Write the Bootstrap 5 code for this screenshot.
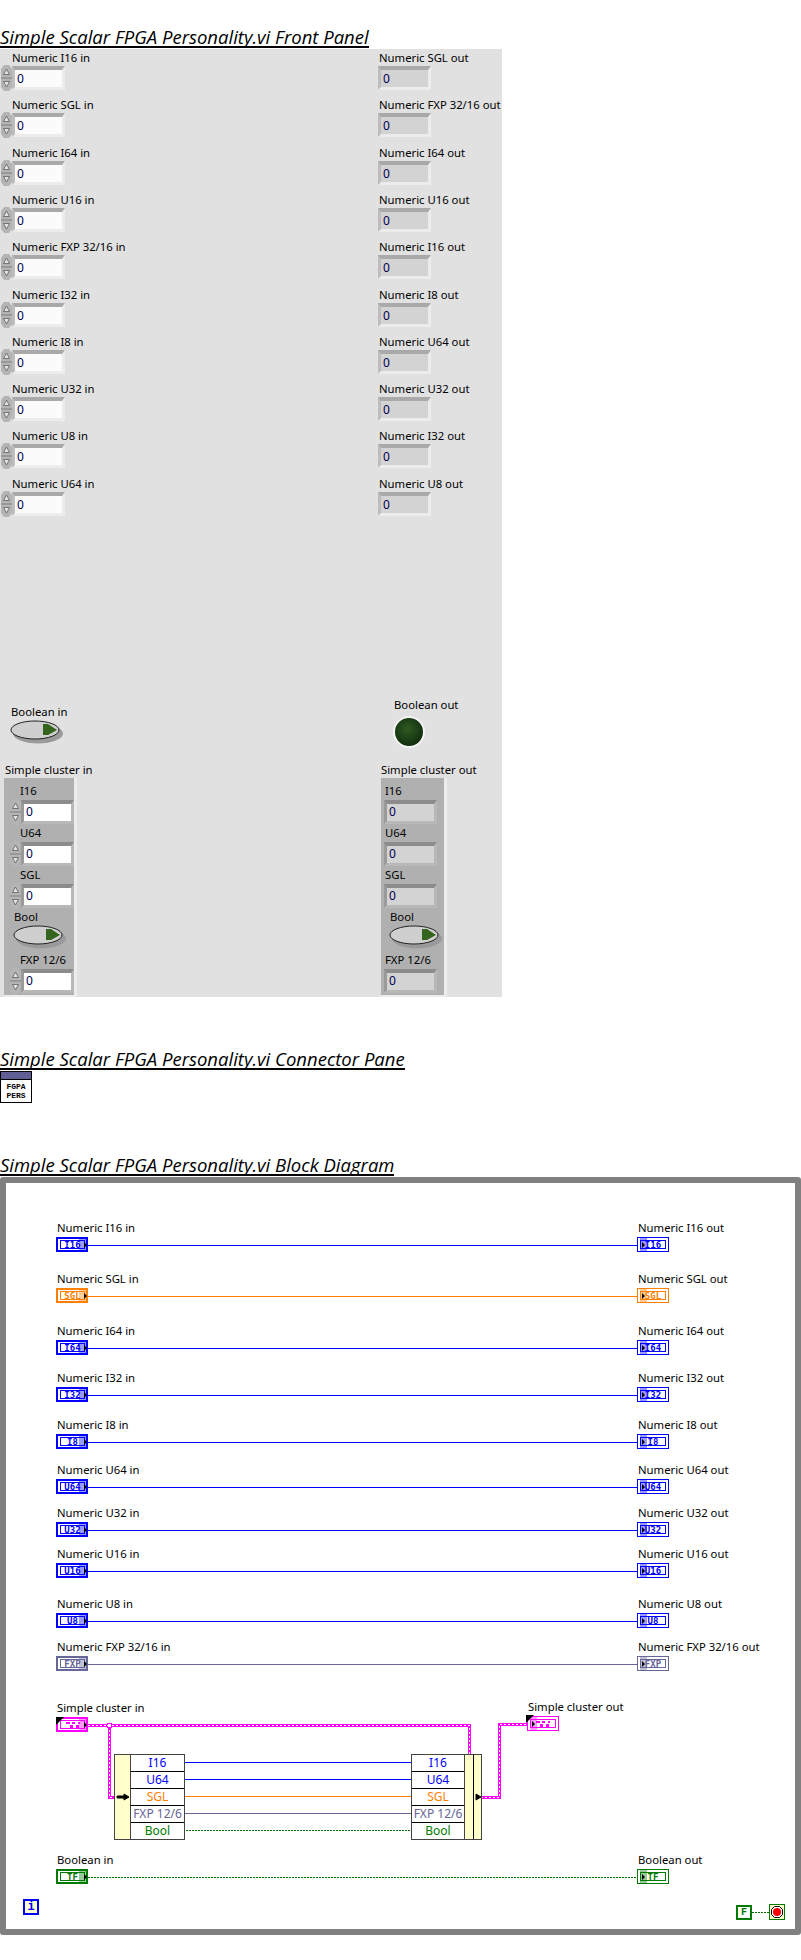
<!DOCTYPE html>
<html lang="en">
<head>
    <meta charset="UTF-8">
    <meta name="viewport" content="width=device-width, initial-scale=1.0">
    <title>Simple Scalar FPGA Personality.vi</title>
    <link href="https://cdn.jsdelivr.net/npm/bootstrap@5.3.2/dist/css/bootstrap.min.css" rel="stylesheet">
    <script src="https://cdn.jsdelivr.net/npm/bootstrap@5.3.2/dist/js/bootstrap.bundle.min.js"></script>
    <style>
        body { background: #fff; color: #000; font-family: "Noto Sans", "Liberation Sans", sans-serif; font-size: 11.3px; }
        .vi-title { display: inline-block; margin: 0; font: italic 400 18.5px/29px "Open Sans", "Noto Sans", sans-serif; border-bottom: 2px solid #000; height: 26px; white-space: nowrap; }
        .vi-head { height: 48px; display: flex; align-items: flex-end; }
        .vi-head-2 { height: 73px; }
        .vi-head-3 { height: 73px; }
        .vi-panel { position: relative; width: 502px; height: 948px; margin-top: 1px; background: #e1e1e1; }
        .vi-cluster { position: absolute; top: 729px; height: 219px; background: #b0b0b0; border-right: 3px solid #ececec; border-bottom: 2px solid #ececec; }
        .vi-cluster-in { left: 4px; width: 73px; }
        .vi-cluster-out { left: 381px; width: 66px; }
        .vi-label { position: absolute; white-space: nowrap; line-height: 14px; font-size: 11.3px; }
        .vi-num { position: absolute; width: 53px; padding-left: 2px; font-size: 12px; line-height: 17px; color: #000050; border-style: solid; border-width: 4px 3px 3px 3px; }
        .vi-ctl { background: #fbfbfb; border-color: #a9a9a9 #ececec #ececec #bdbdbd; }
        .vi-ind { background: #d3d3d3; border-color: #a9a9a9 #ececec #ececec #bdbdbd; }
        .vi-in-cluster.vi-ctl { background: #fff; border-color: #8c8c8c #b8b8b8 #b8b8b8 #9a9a9a; height: 24px; line-height: 16px; }
        .vi-in-cluster.vi-ind { background: #d3d3d3; border-color: #8c8c8c #b8b8b8 #b8b8b8 #9a9a9a; height: 24px; line-height: 16px; }
        .vi-abs { position: absolute; display: block; }
        .vi-led { position: absolute; width: 32px; height: 32px; border-radius: 50%; background: radial-gradient(circle at 45% 40%, #2f5a22 0, #1d4016 45%, #0c240a 85%); border: 2px solid #f4f4f4; }
        .vi-conn { width: 32px; height: 32px; border: 1px solid #000; background: #fff; margin-top: 1px; }
        .vi-conn-top { height: 8px; background: #5f5f96; border-bottom: 1px solid #000; }
        .vi-conn-txt { font: 700 8px/9px "Liberation Mono", monospace; text-align: center; padding-top: 2px; }
        .vi-diagram { position: relative; height: 758px; width: 801px; border: 6px solid #808080; border-radius: 3px; margin-top: 1px; }
        .vi-wires { position: absolute; left: -6px; top: -6px; }
        .vi-term { position: absolute; width: 32px; height: 15px; background: #fff; border: 1px solid var(--w); }
        .vi-term-c { border-width: 2px; }
        .vi-term-box { position: absolute; inset: 2px 2px 2px 2px; border: 1px solid var(--w); color: var(--w); font: 700 9px/9px "DejaVu Sans Mono", monospace; text-align: center; }
        .vi-term-c .vi-term-box { inset: 1px 1px 1px 2px; }
        .vi-term-tab { position: absolute; top: 0; bottom: 0; width: 7px; background: var(--w); opacity: .4; }
        .vi-term-c .vi-term-tab { right: 0; }
        .vi-term-i .vi-term-tab { left: 2px; }
        .vi-term-arrow { position: absolute; top: 50%; margin-top: -3px; border-style: solid; border-width: 3px 0 3px 3px; border-color: transparent transparent transparent #000; }
        .vi-term-c .vi-term-arrow { right: -1px; }
        .vi-term-i .vi-term-arrow { left: 4px; }
        .vi-corner { position: absolute; left: -2px; top: -2px; border-style: solid; border-width: 8px 8px 0 0; border-color: #000 transparent transparent transparent; }
        .vi-node { position: absolute; height: 86px; border: 1px solid #444; background: #fff; }
        .vi-node-bar { background: #ffffcc; }
        .vi-node-row { height: 17px; line-height: 16px; text-align: center; border-top: 1px solid #000; font-size: 12px; }
        .vi-node-row:first-child { border-top: 0; height: 16px; }
        .vi-rows { width: 53px; }
        .vi-sep-r { border-right: 1px solid #444; }
        .vi-sep-l { border-left: 1px solid #000; }
        .vi-loop-i { position: absolute; width: 16px; height: 16px; border: 2px solid #0000ff; background: #ffffcc; color: #0000ff; font: 700 12px/12px "Liberation Mono", monospace; text-align: center; }
        .vi-const { position: absolute; width: 16px; height: 15px; border: 2px solid #007a00; background: #fff; color: #007a00; font: 700 10px/11px "Liberation Mono", monospace; text-align: center; }
    </style>
</head>
<body class="m-0">

<svg width="0" height="0" class="position-absolute">
    <symbol id="spin" viewBox="0 0 13 26">
        <path d="M4 0h5l3 4v18l-3 4H4l-3-4V4z" fill="#b4b4b4"/>
        <path d="M1 13h11" stroke="#7e7e7e"/>
        <path d="M6.5 4l-3 5.5h6z" fill="#e4e4e4" stroke="#5c5c5c" stroke-width=".8"/>
        <path d="M6.5 22l-3-5.5h6z" fill="#e4e4e4" stroke="#5c5c5c" stroke-width=".8"/>
    </symbol>
    <symbol id="toggle" viewBox="0 0 54 24">
        <ellipse cx="28" cy="13.5" rx="25" ry="10" fill="#9a9a9a"/>
        <ellipse cx="25" cy="10" rx="24" ry="9" fill="#cfcfcf" stroke="#222" stroke-width="1"/>
        <path d="M33 4h5l9 6-9 5h-5z" fill="#35641c"/>
    </symbol>
</svg>

<div class="vi-head"><h2 class="vi-title">Simple Scalar FPGA Personality.vi Front Panel</h2></div>
<div class="vi-panel" id="panel">
    <div class="vi-cluster vi-cluster-in"></div>
    <div class="vi-cluster vi-cluster-out"></div>
</div>

<div class="vi-head vi-head-2"><h2 class="vi-title">Simple Scalar FPGA Personality.vi Connector Pane</h2></div>
<div class="vi-conn">
    <div class="vi-conn-top"></div>
    <div class="vi-conn-txt">FGPA<br>PERS</div>
</div>

<div class="vi-head vi-head-3"><h2 class="vi-title">Simple Scalar FPGA Personality.vi Block Diagram</h2></div>
<div class="vi-diagram" id="diagram"></div>

<script>
    const PANEL_Y = 49, DIAG_Y = 1177, BORDER = 6;
    const panel = document.getElementById("panel");
    const diagram = document.getElementById("diagram");

    function add(parent, cls, x, y, html) {
        const el = document.createElement("div");
        el.className = cls;
        el.style.left = x + "px";
        el.style.top = y + "px";
        if (html !== undefined) el.innerHTML = html;
        parent.appendChild(el);
        return el;
    }

    // front panel, all y in page pixels
    const pLabel = (txt, x, y) => add(panel, "vi-label", x, y - PANEL_Y, txt);
    const pSvg = (id, x, y, w, h) => add(panel, "vi-abs", x, y - PANEL_Y,
        `<svg class="d-block" width="${w}" height="${h}"><use href="#${id}"/></svg>`);
    function numCtl(x, y, inCluster) {
        pSvg("spin", x - 12, y - 1, 13, 26);
        const n = add(panel, "vi-num vi-ctl" + (inCluster ? " vi-in-cluster" : ""), x, y - PANEL_Y, "0");
        return n;
    }
    function numInd(x, y, inCluster) {
        return add(panel, "vi-num vi-ind" + (inCluster ? " vi-in-cluster" : ""), x, y - PANEL_Y, "0");
    }

    const inNames = ["I16", "SGL", "I64", "U16", "FXP 32/16", "I32", "I8", "U32", "U8", "U64"];
    const outNames = ["SGL", "FXP 32/16", "I64", "U16", "I16", "I8", "U64", "U32", "I32", "U8"];
    inNames.forEach((n, i) => {
        const y = Math.round(66 + i * 47.3);
        pLabel(`Numeric ${n} in`, 12, y - 15);
        numCtl(12, y);
    });
    outNames.forEach((n, i) => {
        const y = Math.round(66 + i * 47.3);
        pLabel(`Numeric ${n} out`, 379, y - 15);
        numInd(378, y);
    });

    pLabel("Boolean in", 11, 705);
    pSvg("toggle", 10, 720, 54, 24);
    pLabel("Boolean out", 394, 698);
    add(panel, "vi-led", 393, 716 - PANEL_Y);
    pLabel("Simple cluster in", 5, 763);
    pLabel("Simple cluster out", 381, 763);

    [["I16", 800], ["U64", 842], ["SGL", 884]].forEach(([n, y]) => {
        pLabel(n, 20, y - 16);
        numCtl(21, y, true);
        pLabel(n, 385, y - 16);
        numInd(384, y, true);
    });
    pLabel("Bool", 14, 910);
    pSvg("toggle", 13, 925, 54, 24);
    pLabel("Bool", 390, 910);
    pSvg("toggle", 389, 925, 54, 24);
    pLabel("FXP 12/6", 20, 953);
    numCtl(21, 969, true);
    pLabel("FXP 12/6", 385, 953);
    numInd(384, 969, true);

    // block diagram, x and y in page pixels
    const BLUE = "#0000ff", ORANGE = "#ff8000", FXP = "#666699", PINK = "#ff00ff", GREEN = "#007a00";
    const dLabel = (txt, x, y) => add(diagram, "vi-label", x - BORDER, y - DIAG_Y - BORDER, txt);

    function terminal(x, y, kind, color, txt, corner) {
        const t = add(diagram, "vi-term " + (kind === "c" ? "vi-term-c" : "vi-term-i"), x - BORDER, y - DIAG_Y - BORDER,
            `<span class="vi-term-box">${txt}</span><i class="vi-term-tab"></i><i class="vi-term-arrow"></i>` + (corner ? '<i class="vi-corner"></i>' : ""));
        t.style.setProperty("--w", color);
    }

    const rows = [
        ["I16", BLUE, 1245], ["SGL", ORANGE, 1296], ["I64", BLUE, 1348], ["I32", BLUE, 1395], ["I8", BLUE, 1442],
        ["U64", BLUE, 1487], ["U32", BLUE, 1530], ["U16", BLUE, 1571], ["U8", BLUE, 1621], ["FXP 32/16", FXP, 1664]
    ];
    const shortName = n => n.split(" ")[0];
    let wires = "";
    const wy = y => y - DIAG_Y + 0.5;
    const line = (x1, y, x2, c, extra) => `<path d="M${x1} ${wy(y)}H${x2}" stroke="${c}" ${extra || ""}/>`;

    rows.forEach(([n, c, y]) => {
        dLabel(`Numeric ${n} in`, 57, y - 24);
        dLabel(`Numeric ${n} out`, 638, y - 24);
        terminal(56, y - 8, "c", c, shortName(n));
        terminal(637, y - 8, "i", c, shortName(n));
        wires += line(88, y, 637, c);
    });

    // cluster wires
    const pinkPath = `M88 ${wy(1725)}H469.5V${wy(1754)}M109.5 ${wy(1725)}V${wy(1797)}H118M481 ${wy(1797)}H499.5V${wy(1724)}H527`;
    wires += `<path d="${pinkPath}" fill="none" stroke="${PINK}" stroke-width="3"/>`;
    wires += `<path d="${pinkPath}" fill="none" stroke="#fff" stroke-dasharray="2 2"/>`;
    wires += `<circle cx="109.5" cy="${wy(1725)}" r="2.5" fill="#fff" stroke="${PINK}"/>`;

    const nodeRows = [["I16", BLUE, 1762], ["U64", BLUE, 1779], ["SGL", ORANGE, 1796], ["FXP 12/6", FXP, 1813], ["Bool", GREEN, 1830]];
    nodeRows.forEach(([n, c, y]) => {
        wires += n === "Bool" ? line(183, y, 411, "#007000", 'stroke-dasharray="2 1"') : line(183, y, 411, c);
    });

    // boolean and stop wires
    wires += line(88, 1877, 637, "#007000", 'stroke-dasharray="2 1"');
    wires += line(752, 1912, 769, "#007000", 'stroke-dasharray="2 1"');

    const rowHtml = nodeRows.map(([n, c]) => `<div class="vi-node-row" style="color:${c}">${n}</div>`).join("");
    const arrow = (w) => `<svg class="vi-abs" style="left:0;top:0" width="${w}" height="84"><path d="M2 41h${w - 8}v-2l5 3-5 3v-2H2z" fill="#000" stroke="#000"/></svg>`;

    add(diagram, "vi-node d-flex", 114 - BORDER, 1754 - DIAG_Y - BORDER,
        `<div class="vi-node-bar vi-sep-r position-relative" style="width:16px">${arrow(15)}</div><div class="vi-rows">${rowHtml}</div>`);
    add(diagram, "vi-node d-flex", 411 - BORDER, 1754 - DIAG_Y - BORDER,
        `<div class="vi-rows vi-sep-r">${rowHtml}</div><div class="vi-node-bar position-relative" style="width:8px"></div><div class="vi-node-bar vi-sep-l position-relative" style="width:8px">${arrow(8)}</div>`);

    // cluster and boolean terminals
    const clusterGlyph = '<svg width="18" height="8" class="d-block mx-auto mt-0"><path d="M2 1h4v2H2zM8 1h3v2H8zM14 1h2v2h-2zM6 4h3v3H6zM12 4h3v3h-3z" fill="#ff00ff"/></svg>';
    dLabel("Simple cluster in", 57, 1701);
    terminal(56, 1717, "c", PINK, clusterGlyph, true);
    dLabel("Simple cluster out", 528, 1700);
    terminal(527, 1716, "i", PINK, clusterGlyph, true);
    dLabel("Boolean in", 57, 1853);
    terminal(56, 1869, "c", GREEN, "TF");
    dLabel("Boolean out", 638, 1853);
    terminal(637, 1869, "i", GREEN, "TF");

    add(diagram, "vi-loop-i", 23 - BORDER, 1899 - DIAG_Y - BORDER, "i");
    add(diagram, "vi-const", 736 - BORDER, 1905 - DIAG_Y - BORDER, "F");
    add(diagram, "vi-abs", 769 - BORDER, 1904 - DIAG_Y - BORDER,
        `<svg class="d-block" width="16" height="16"><rect x=".5" y=".5" width="15" height="15" fill="#ffffcc" stroke="#007a00"/><path d="M5.5 2.5h5l3 3v5l-3 3h-5l-3-3v-5z" fill="#fff" stroke="#000"/><circle cx="8" cy="8" r="4" fill="#ff0000"/></svg>`);

    const svg = document.createElementNS("http://www.w3.org/2000/svg", "svg");
    svg.setAttribute("class", "vi-wires");
    svg.setAttribute("width", 801);
    svg.setAttribute("height", 758);
    svg.setAttribute("shape-rendering", "crispEdges");
    svg.innerHTML = wires;
    diagram.insertBefore(svg, diagram.firstChild);
</script>

</body>
</html>
